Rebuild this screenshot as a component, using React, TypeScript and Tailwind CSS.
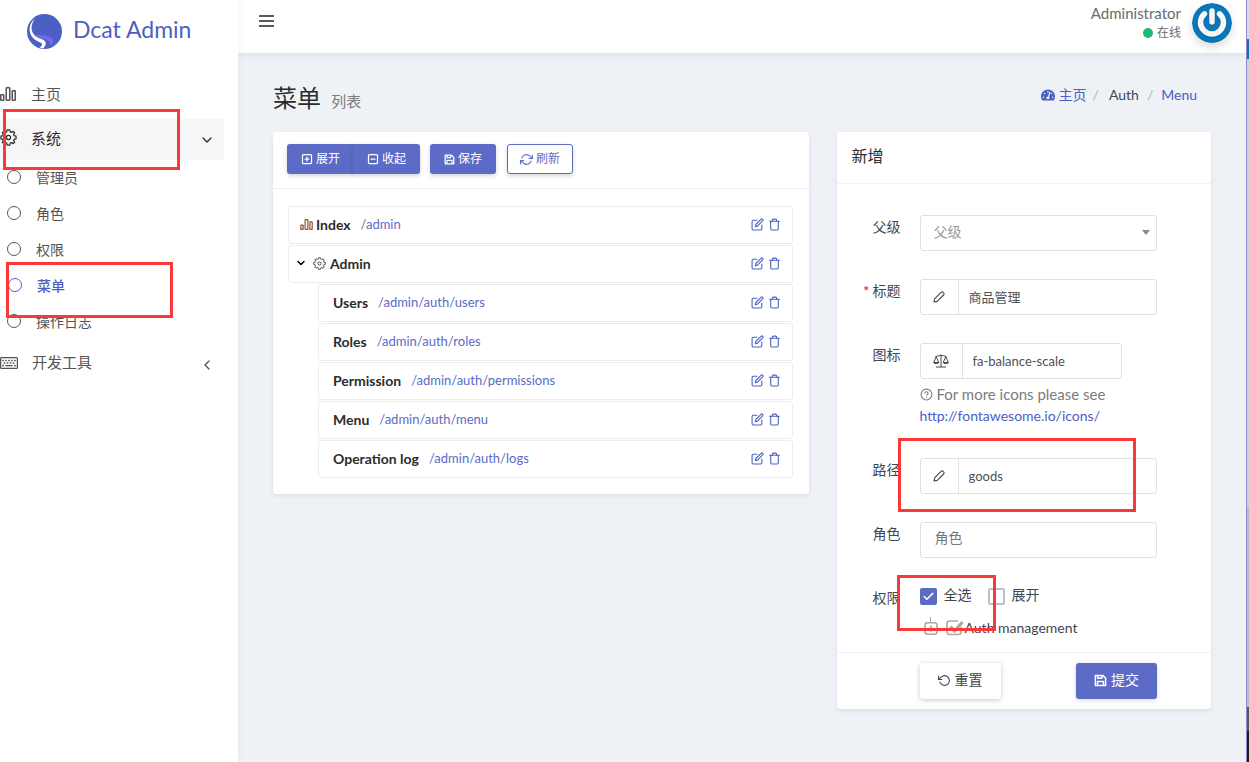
import type { ReactNode } from 'react';
import { FaRegKeyboard, FaTachometerAlt } from 'react-icons/fa';
import {
  FiCheck,
  FiChevronDown,
  FiChevronLeft,
  FiEdit,
  FiHelpCircle,
  FiMinusSquare,
  FiPlusSquare,
  FiRefreshCw,
  FiRotateCcw,
  FiTrash,
} from 'react-icons/fi';

const systemItems = [
  { name: '管理员' },
  { name: '角色' },
  { name: '权限' },
  { name: '菜单', active: true },
  { name: '操作日志' },
];

const authMenus = [
  { name: 'Users', path: '/admin/auth/users' },
  { name: 'Roles', path: '/admin/auth/roles' },
  { name: 'Permission', path: '/admin/auth/permissions' },
  { name: 'Menu', path: '/admin/auth/menu' },
  { name: 'Operation log', path: '/admin/auth/logs' },
];

function BarsIcon({ className }: { className?: string }) {
  return (
    <svg viewBox="0 0 16 14" fill="none" stroke="currentColor" strokeWidth="1.5" className={className} aria-hidden>
      <rect x="0.75" y="7.75" width="3" height="5.5" rx="0.5" />
      <rect x="6.25" y="0.75" width="3.5" height="12.5" rx="0.5" />
      <rect x="12.25" y="3.75" width="3" height="9.5" rx="0.5" />
    </svg>
  );
}

function GearIcon({ className }: { className?: string }) {
  return (
    <svg viewBox="0 0 18 18" fill="none" stroke="currentColor" strokeWidth="1.3" strokeLinejoin="round" className={className} aria-hidden>
      <circle cx="9" cy="9" r="2.2" />
      <path d="M7.6 1h2.8l.5 2.1 1.2.5 1.9-1.1 1.5 1.5-1.1 1.9.5 1.2 2.1.5v2.8l-2.1.5-.5 1.2 1.1 1.9-1.5 1.5-1.9-1.1-1.2.5-.5 2.1H7.6l-.5-2.1-1.2-.5L4 15.5 2.5 14l1.1-1.9-.5-1.2L1 10.4V7.6l2.1-.5.5-1.2L2.5 4 4 2.5l1.9 1.1 1.2-.5z" />
    </svg>
  );
}

function SaveIcon({ className }: { className?: string }) {
  return (
    <svg viewBox="0 0 14 14" fill="none" stroke="currentColor" strokeWidth="1.6" strokeLinejoin="round" className={className} aria-hidden>
      <path d="M1.5 1.5h8l3 3v8h-11z" />
      <path d="M4 1.5v3.2h4.5V1.5M3.8 12.5V8h6.4v4.5" />
    </svg>
  );
}

function PencilIcon() {
  return (
    <svg viewBox="0 0 12 12" fill="none" stroke="currentColor" strokeWidth="1.1" strokeLinejoin="round" className="size-3" aria-hidden>
      <path d="M1 11l.6-3.2L8 1.4a1.5 1.5 0 0 1 2.2 0l.4.4a1.5 1.5 0 0 1 0 2.2L4.2 10.4z" />
    </svg>
  );
}

function ScaleIcon() {
  return (
    <svg viewBox="0 0 16 14" fill="none" stroke="currentColor" strokeWidth="1" strokeLinejoin="round" className="h-3.5 w-4" aria-hidden>
      <path d="M8 .5V13M3 13h10M2.5 2.500c2 0 3.500-1.200 5.500-1.200s3.500 1.200 5.500 1.200" />
      <path d="M3.2 2.7L.6 8.500h5.200zM12.8 2.7l-2.600 5.800h5.200z" />
      <path d="M.6 8.500c.3 1.600 4.900 1.600 5.200 0M10.200 8.500c.3 1.600 4.900 1.600 5.200 0" />
    </svg>
  );
}

function Logo() {
  return (
    <svg viewBox="0 0 35 35" className="size-[35px]" aria-hidden>
      <circle cx="17.5" cy="17.5" r="17.5" fill="#4c60c3" />
      <path d="M5 17.5c2 3.500 6 3.500 10.500 3.800 5.500.3 10.500 1.700 10.800 5.700.1 2-1.300 3.500-3.300 4.500.8-3.500-1.500-5.500-6-6.500C11.500 23.800 6.500 23 5 17.500z" fill="#7367f0" />
      <path d="M8 4.500C4.800 8.500 3.800 13.500 5.200 17.500c1.600 4.700 5.300 6.300 9.300 7.600 4.500 1.500 6 4.900 1.800 9.300-1.500 0-2.800-.3-4-.8 3-1.800 4-3.800 1-5.100C8.500 26.500 4.500 24 3 18.500 1.700 13.500 3.500 8 8 4.500z" fill="#fff" />
    </svg>
  );
}

function Avatar() {
  return (
    <svg viewBox="0 0 40 40" className="size-10 rounded-full shadow-[0_4px_8px_0_rgba(0,0,0,0.14)]" aria-hidden>
      <circle cx="20" cy="20" r="20" fill="#0b76b8" />
      <path d="M12.500 11.500a11.500 11.500 0 1 0 15 0M20 9v11" fill="none" stroke="#00508a" strokeOpacity="0.4" strokeWidth="6.500" strokeLinecap="round" />
      <path d="M12.500 10.800a11.500 11.500 0 1 0 15 0M20 8v11" fill="none" stroke="#f7f7f5" strokeWidth="5.500" strokeLinecap="round" />
    </svg>
  );
}

function Marker({ className }: { className: string }) {
  return <div className={`pointer-events-none absolute z-10 border-3 border-[#fb3838] ${className}`} aria-hidden />;
}

function Sidebar() {
  return (
    <aside className="relative z-10 w-[238px] shrink-0 bg-white text-[15px] text-[#545454] shadow-[0_0_8px_rgba(0,0,0,0.06)]">
      <a href="#" className="flex h-[62px] items-center gap-[11px] pl-[27px] text-[#4c60c3]">
        <Logo />
        <span className="pb-1 text-[23px] leading-none">Dcat Admin</span>
      </a>
      <nav className="relative mt-3 flex flex-col gap-1">
        <a href="#" className="flex h-[41px] items-center">
          <BarsIcon className="mb-0.5 h-3.5 w-4" />
          <span className="pl-[15px]">主页</span>
        </a>
        <div>
          <button type="button" className="flex h-[41px] w-[224px] items-center rounded-r-[3px] bg-[#f6f6f9] text-[#2c2c2c]">
            <GearIcon className="mb-1 size-[17px]" />
            <span className="flex-1 pb-0.5 pl-3.5 text-left">系统</span>
            <FiChevronDown className="mr-[9px] size-4" />
          </button>
          <ul className="text-sm">
            {systemItems.map((item) => (
              <li key={item.name}>
                <a
                  href="#"
                  className={item.active ? 'flex h-9 items-center pl-2 font-medium text-[#4c60c3]' : 'flex h-9 items-center pl-[7px]'}
                >
                  <span className="mb-0.5 size-3.5 rounded-full border border-current" />
                  <span className="pl-[15px]">{item.name}</span>
                </a>
              </li>
            ))}
          </ul>
        </div>
        <button type="button" className="flex h-[41px] w-[224px] items-center">
          <FaRegKeyboard className="mb-1 h-4 w-[18px]" />
          <span className="flex-1 pb-1 pl-3.5 text-left">开发工具</span>
          <FiChevronLeft className="mr-[9px] size-4" />
        </button>
        <Marker className="top-[35px] left-[3px] h-[61px] w-[177px]" />
        <Marker className="top-[188px] left-1.5 h-14 w-[167px]" />
      </nav>
    </aside>
  );
}

function Topbar() {
  return (
    <header className="flex h-[53px] items-start justify-between bg-white pr-3.5 pl-[21px] text-[#6b6b6b] shadow-[0_2px_8px_rgba(0,0,0,0.08)]">
      <button type="button" aria-label="Toggle menu" className="mt-[15px] flex flex-col gap-[3px]">
        <span className="h-0.5 w-[15px] bg-[#5a5a5a]" />
        <span className="h-0.5 w-[15px] bg-[#5a5a5a]" />
        <span className="h-0.5 w-[15px] bg-[#5a5a5a]" />
      </button>
      <div className="flex gap-[11px] pt-[3px]">
        <div className="text-right">
          <div className="text-[15px] leading-5">Administrator</div>
          <div className="flex items-center justify-end gap-1 text-xs leading-5">
            <span className="size-2.5 rounded-full bg-[#21b978]" />
            在线
          </div>
        </div>
        <Avatar />
      </div>
    </header>
  );
}

function RowActions() {
  return (
    <div className="ml-auto flex items-center gap-1 pb-0.5 text-[#4c60c3]">
      <button type="button" aria-label="Edit">
        <FiEdit className="size-[13px]" />
      </button>
      <button type="button" aria-label="Delete">
        <FiTrash className="size-[13px]" />
      </button>
    </div>
  );
}

const rowClass = 'flex h-[38px] items-center rounded-[3px] border border-[#e9eff0] pr-[11px] text-[13px]';
const nameClass = 'text-sm font-bold text-[#2c2c2c]';
const solidButton = 'flex h-[30px] items-center gap-[3px] px-3.5 text-xs text-white bg-[#5c6bc6] shadow-[0_2px_4px_rgba(0,0,0,0.16)]';

function MenuCard() {
  return (
    <section className="rounded-[3px] bg-white shadow-[0_2px_4px_rgba(0,0,0,0.08)]">
      <div className="flex h-[57px] items-center border-b border-[#f1f1f5] px-3.5 pb-0.5">
        <button type="button" className={`${solidButton} rounded-l-[3px]`}>
          <FiPlusSquare className="size-3" strokeWidth={2.5} />
          展开
        </button>
        <button type="button" className={`${solidButton} -ml-px rounded-r-[3px]`}>
          <FiMinusSquare className="size-3" strokeWidth={2.5} />
          收起
        </button>
        <button type="button" className={`${solidButton} ml-2.5 rounded-[3px]`}>
          <SaveIcon className="size-[11px]" />
          保存
        </button>
        <button
          type="button"
          className="ml-[11px] flex h-[30px] items-center gap-[3px] rounded-[3px] border border-[#5c6bc6] bg-white px-3 text-xs text-[#5c6bc6] shadow-[0_2px_4px_rgba(0,0,0,0.16)]"
        >
          <FiRefreshCw className="size-[13px]" />
          刷新
        </button>
      </div>
      <ul className="flex flex-col gap-px pt-[17px] pr-4 pb-4 pl-[15px]">
        <li className={`${rowClass} pl-[11px]`}>
          <BarsIcon className="mb-0.5 h-[11px] w-[13px] text-[#8a5230]" />
          <span className={`${nameClass} pl-[3px]`}>Index</span>
          <a href="#" className="pl-2.5 text-[#5c6bc6]">/admin</a>
          <RowActions />
        </li>
        <li>
          <div className={`${rowClass} pl-1.5`}>
            <button type="button" aria-label="Collapse">
              <FiChevronDown className="mb-0.5 size-3 text-black" strokeWidth={3} />
            </button>
            <GearIcon className="mb-0.5 ml-1.5 size-[13px] text-[#414750]" />
            <span className={`${nameClass} pl-1`}>Admin</span>
            <RowActions />
          </div>
          <ul className="mt-px flex flex-col gap-px pl-[30px]">
            {authMenus.map((menu) => (
              <li key={menu.path} className={`${rowClass} pl-3.5`}>
                <span className={nameClass}>{menu.name}</span>
                <a href="#" className="pl-2.5 text-[#5c6bc6]">{menu.path}</a>
                <RowActions />
              </li>
            ))}
          </ul>
        </li>
      </ul>
    </section>
  );
}

function Field({ id, label, required, children }: { id: string; label: string; required?: boolean; children: ReactNode }) {
  return (
    <div className="mb-7 flex gap-[19px]">
      <label htmlFor={id} className="w-16 shrink-0 pt-0.5 text-right leading-5">
        {required && <span className="font-bold text-[#d9363e]">* </span>}
        {label}
      </label>
      <div className="min-w-0 flex-1">{children}</div>
    </div>
  );
}

const boxClass = 'flex h-9 items-stretch rounded-[3px] border border-[#dbe3e6]';
const addonClass = 'flex items-center justify-center border-r border-[#dbe3e6]';
const inputClass = 'min-w-0 flex-1 bg-transparent px-2.5 text-[13px] text-[#4e5154] outline-none';

function FormCard() {
  return (
    <form className="rounded-[3px] bg-white text-sm text-[#414750] shadow-[0_2px_4px_rgba(0,0,0,0.08)]">
      <h2 className="flex h-[52px] items-center border-b border-[#f1f1f5] px-[15px] pb-1 text-base text-[#2c2c2c]">新增</h2>
      <div className="pt-[31px] pr-[54px] pb-3">
        <Field id="parent" label="父级">
          <div className="relative">
            <select id="parent" defaultValue="" className="h-9 w-full appearance-none rounded-[3px] border border-[#dbe3e6] px-[13px] pb-0.5 text-[#999]">
              <option value="">父级</option>
            </select>
            <span className="pointer-events-none absolute top-[15px] right-[7px] border-x-4 border-t-5 border-x-transparent border-t-[#888]" />
          </div>
        </Field>
        <Field id="title" label="标题" required>
          <div className={boxClass}>
            <span className={`${addonClass} w-[38px]`}><PencilIcon /></span>
            <input id="title" defaultValue="商品管理" className={inputClass} />
          </div>
        </Field>
        <Field id="icon" label="图标">
          <div className={`${boxClass} w-[202px]`}>
            <span className={`${addonClass} w-[42px]`}><ScaleIcon /></span>
            <input id="icon" defaultValue="fa-balance-scale" className={inputClass} />
          </div>
          <p className="pt-[5px] pb-1 leading-[21px] whitespace-nowrap text-[#7c7c7c]">
            <FiHelpCircle className="mr-1 inline size-[13px] align-[-1px]" />
            <span className="text-[15px]">For more icons please see</span>
            <br />
            <a href="#" className="text-[#4c60c3]">http://fontawesome.io/icons/</a>
          </p>
        </Field>
        <div className="relative">
          <Field id="path" label="路径">
            <div className={boxClass}>
              <span className={`${addonClass} w-[38px]`}><PencilIcon /></span>
              <input id="path" defaultValue="goods" className={inputClass} />
            </div>
          </Field>
          <Marker className="-top-5 left-[61px] h-[74px] w-[238px]" />
        </div>
        <Field id="roles" label="角色">
          <div className={boxClass}>
            <input id="roles" placeholder="角色" className="min-w-0 flex-1 bg-transparent px-3.5 pb-1 placeholder:text-[#777] outline-none" />
          </div>
        </Field>
        <div className="relative flex gap-[19px]">
          <span className="w-16 shrink-0 pt-0.5 text-right leading-5">权限</span>
          <div className="min-w-0 flex-1">
            <div className="flex h-5 items-center gap-4">
              <label className="flex items-center gap-[7px]">
                <span className="relative flex">
                  <input type="checkbox" defaultChecked className="size-[17px] appearance-none rounded-xs bg-[#5c6bc6]" />
                  <FiCheck className="pointer-events-none absolute top-0.5 left-0.5 size-[13px] text-white" strokeWidth={3} />
                </span>
                <span className="pb-0.5">全选</span>
              </label>
              <label className="flex items-center gap-[7px]">
                <input type="checkbox" className="size-[17px] appearance-none rounded-xs border-2 border-[#b8c2cc]" />
                <span className="pb-0.5">展开</span>
              </label>
            </div>
            <div className="mt-[11px] mb-px flex h-[22px] items-center">
              <svg viewBox="0 0 45 22" fill="none" stroke="#a9a9a9" className="h-[22px] w-[45px]" aria-hidden>
                <path d="M10.5 0v6M17 11.5h5" />
                <rect x="5" y="5.7" width="12" height="11.5" rx="2.5" strokeWidth="1.6" />
                <path d="M11 8.5v6M8 11.5h6" strokeWidth="1.6" />
                <path d="M41 10v5a2.500 2.500 0 0 1-2.500 2.500h-9A2.500 2.500 0 0 1 27 15V6.500A2.500 2.500 0 0 1 29.500 4H38" strokeWidth="1.6" />
                <path d="M30.5 9.500l4 4.500L42.500 5" strokeWidth="3.2" />
              </svg>
              <span>Auth management</span>
            </div>
          </div>
          <Marker className="-top-[11px] left-[60px] h-[56px] w-[99px]" />
        </div>
      </div>
      <div className="flex justify-between border-t border-[#f1f1f5] pt-2.5 pr-[54px] pb-2.5 pl-[83px]">
        <button type="reset" className="flex h-9 items-center gap-1 rounded-[3px] px-[18px] pb-0.5 shadow-[0_1px_5px_rgba(0,0,0,0.22)]">
          <FiRotateCcw className="size-[13px]" />
          重置
        </button>
        <button type="button" className="flex h-9 items-center gap-1 rounded-[3px] bg-[#5c6bc6] px-[18px] pb-0.5 text-white shadow-[0_1px_4px_rgba(0,0,0,0.16)]">
          <SaveIcon className="size-[13px]" />
          提交
        </button>
      </div>
    </form>
  );
}

// Sliver of the window that sits behind the browser.
function WindowEdge() {
  return (
    <div className="relative z-10 flex w-[3px] shrink-0 flex-col border-l border-[#8f89cf] bg-[#cfd0d8]" aria-hidden>
      <div className="h-[39px] bg-[#dcdce6]" />
      <div className="h-5 bg-[#0f6fb0]" />
      <div className="flex-1" />
      <div className="h-[200px] bg-[#b9bcc8]" />
      <div className="h-6 bg-[#57565f]" />
      <div className="h-[31px] bg-[#1b1820]" />
    </div>
  );
}

export default function App() {
  return (
    <div className="flex min-h-screen bg-[#eef1f6] font-['Lato','Noto_Sans_CJK_SC',sans-serif]">
      <Sidebar />
      <div className="min-w-0 flex-1">
        <Topbar />
        <main className="px-[35px] pt-6 pb-10">
          <div className="flex h-[55px] items-start justify-between pr-3.5">
            <h1 className="text-2xl leading-[42px] text-[#2c2c2c]">
              菜单 <small className="pl-1 text-[15px] text-[#7c7c7c]">列表</small>
            </h1>
            <nav aria-label="Breadcrumb" className="flex items-center text-sm leading-9 text-[#4c60c3]">
              <FaTachometerAlt className="mr-1 size-3.5" />
              <a href="#">主页</a>
              <span className="pr-2 pl-1.5 text-[#b0b4bb]">/</span>
              <span className="pl-0.5 text-[#414750]">Auth</span>
              <span className="px-2 text-[#b0b4bb]">/</span>
              <a href="#">Menu</a>
            </nav>
          </div>
          <div className="-mx-3.5 flex items-start">
            <div className="w-7/12 px-3.5">
              <MenuCard />
            </div>
            <div className="w-5/12 px-3.5">
              <FormCard />
            </div>
          </div>
        </main>
      </div>
      <WindowEdge />
    </div>
  );
}
